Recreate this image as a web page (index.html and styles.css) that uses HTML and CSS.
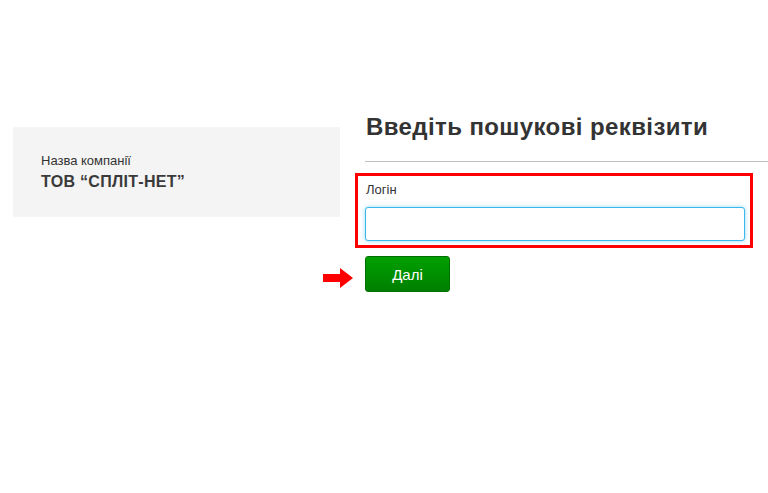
FILE: index.html
```html
<!DOCTYPE html>
<html lang="uk">
<head>
  <meta charset="utf-8">
  <title>Пошук</title>
  <link rel="stylesheet" href="styles.css">
</head>
<body>
  <div class="page">
    <div class="company">
      <div class="company-label">Назва компанії</div>
      <div class="company-name">ТОВ “СПЛІТ-НЕТ”</div>
    </div>

    <div class="main">
      <h1>Введіть пошукові реквізити</h1>
      <hr class="divider">

      <div class="field highlight">
        <label for="login">Логін</label>
        <input type="text" id="login">
      </div>

      <div class="actions">
        <svg class="pointer" width="30" height="20" viewBox="0 0 30 20">
          <polygon points="0,6 17,6 17,0 30,10 17,20 17,14 0,14" fill="#f00"/>
        </svg>
        <button type="button">Далі</button>
      </div>
    </div>
  </div>
</body>
</html>
```

FILE: styles.css
```css
body {
  margin: 0;
  font-family: "Liberation Sans", Arial, sans-serif;
  color: #333;
  background: #fff;
}
.page {
  display: flex;
  align-items: flex-start;
  padding-top: 112px;
}
.company {
  width: 327px;
  margin-left: 13px;
  margin-top: 15px;
  height: 90px;
  box-sizing: border-box;
  padding: 26px 28px 0;
  background: #f4f4f4;
  border-radius: 2px;
}
.company-label {
  font-size: 13px;
  line-height: 16px;
  color: #333;
}
.company-name {
  margin-top: 4px;
  font-size: 16px;
  font-weight: bold;
  color: #3a3a3a;
  letter-spacing: 0.3px;
}
.main {
  flex: 1;
  margin-left: 25px;
}
h1 {
  margin: 0 0 0 1px;
  font-size: 24px;
  line-height: 30px;
  font-weight: bold;
  color: #333;
  letter-spacing: 0.4px;
}
.divider {
  margin: 19px 0 0;
  border: none;
  border-top: 1px solid #c0c0c0;
}
.field {
  display: flex;
  flex-direction: column;
}
.field label {
  font-size: 13px;
  line-height: 16px;
  margin: 0 0 9px 1px;
  color: #333;
}
.field input {
  height: 34px;
  box-sizing: border-box;
  border: 1px solid #3ab8ec;
  border-radius: 3px;
  box-shadow: 0 0 4px rgba(80, 190, 240, 0.6);
  outline: none;
  padding: 4px 8px;
  font-size: 14px;
}
.highlight {
  margin: 11px 15px 0 -10px;
  border: 3px solid #f00;
  padding: 6px 5px 4px 7px;
}
.actions {
  position: relative;
  margin-top: 8px;
}
.pointer {
  position: absolute;
  left: -42px;
  top: 12px;
}
button {
  width: 85px;
  height: 36px;
  border: 1px solid #006f00;
  border-radius: 3px;
  background: linear-gradient(#00a000, #007f00);
  color: #fff;
  font-family: "Liberation Sans", Arial, sans-serif;
  font-size: 15px;
  cursor: pointer;
}
```
